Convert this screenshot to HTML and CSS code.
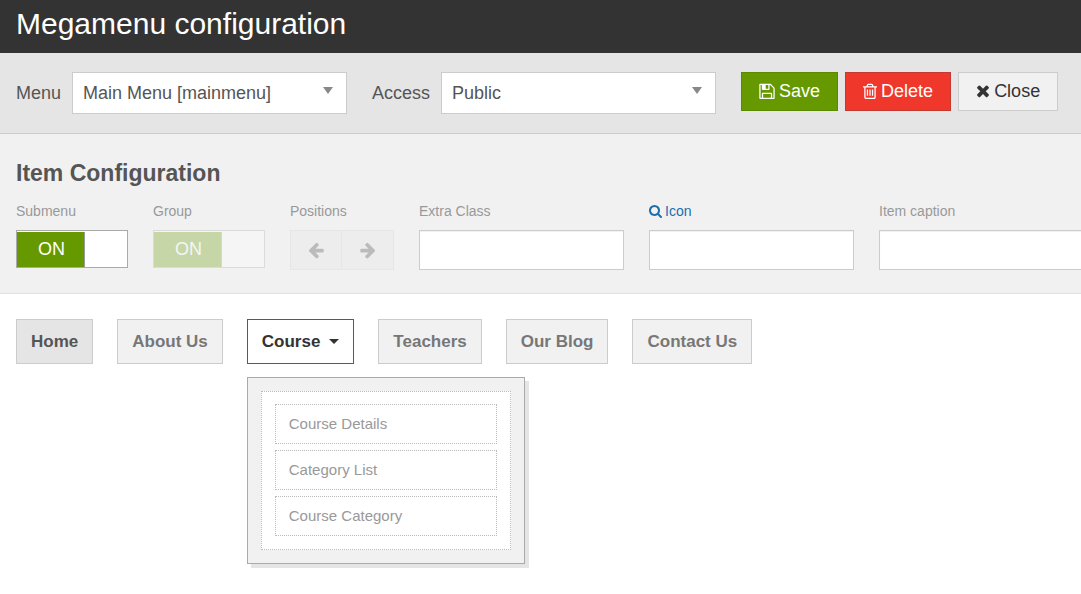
FILE: index.html
```html
<!DOCTYPE html>
<html lang="en">
<head>
<meta charset="utf-8">
<meta name="viewport" content="width=device-width, initial-scale=1">
<title>Megamenu configuration</title>
<link rel="stylesheet" href="styles.css">
</head>
<body>
<header class="page-header">
  <h1 class="page-title">Megamenu configuration</h1>
</header>

<form class="toolbar">
  <div class="picker">
    <label class="picker-label" for="menu-type">Menu</label>
    <div class="select-box">
      <select class="select" id="menu-type"><option>Main Menu [mainmenu]</option></select>
      <span class="select-arrow"></span>
    </div>
  </div>
  <div class="picker">
    <label class="picker-label" for="access-level">Access</label>
    <div class="select-box">
      <select class="select" id="access-level"><option>Public</option></select>
      <span class="select-arrow"></span>
    </div>
  </div>
  <div class="actions">
    <button class="btn btn-save" type="button">
      <svg class="btn-icon" width="16" height="18" viewBox="128 64 1536 1792" aria-hidden="true"><path d="M512 1536h768v-384h-768v384zm896 0h128v-896q0-14-10-38.5t-20-34.5l-281-281q-10-10-34-20t-39-10v416q0 40-28 68t-68 28h-576q-40 0-68-28t-28-68v-416h-128v1280h128v-416q0-40 28-68t68-28h832q40 0 68 28t28 68v416zm-384-928v-320q0-13-9.5-22.5t-22.5-9.5h-192q-13 0-22.5 9.5t-9.5 22.5v320q0 13 9.5 22.5t22.5 9.5h192q13 0 22.5-9.5t9.5-22.5zm640 32v928q0 40-28 68t-68 28h-1344q-40 0-68-28t-28-68v-1344q0-40 28-68t68-28h928q40 0 88 20t76 48l280 280q28 28 48 76t20 88z"/></svg>
      Save
    </button>
    <button class="btn btn-delete" type="button">
      <svg class="btn-icon" width="14" height="18" viewBox="192 64 1408 1792" aria-hidden="true"><path d="M704 736v576q0 14-9 23t-23 9h-64q-14 0-23-9t-9-23v-576q0-14 9-23t23-9h64q14 0 23 9t9 23zm256 0v576q0 14-9 23t-23 9h-64q-14 0-23-9t-9-23v-576q0-14 9-23t23-9h64q14 0 23 9t9 23zm256 0v576q0 14-9 23t-23 9h-64q-14 0-23-9t-9-23v-576q0-14 9-23t23-9h64q14 0 23 9t9 23zm128 724v-948h-896v948q0 22 7 40.5t14.5 27 10.5 8.5h832q3 0 10.5-8.5t14.5-27 7-40.5zm-672-1076h448l-48-117q-7-9-17-11h-317q-10 2-17 11zm928 32v64q0 14-9 23t-23 9h-96v948q0 83-47 143.5t-113 60.5h-832q-66 0-113-58.5t-47-141.5v-952h-96q-14 0-23-9t-9-23v-64q0-14 9-23t23-9h309l70-167q15-37 54-63t79-26h320q40 0 79 26t54 63l70 167h309q14 0 23 9t9 23z"/></svg>
      Delete
    </button>
    <button class="btn" type="button">
      <svg class="btn-icon" width="14" height="18" viewBox="192 128 1408 1792" aria-hidden="true"><path d="M1490 1322q0 40-28 68l-136 136q-28 28-68 28t-68-28l-294-294-294 294q-28 28-68 28t-68-28l-136-136q-28-28-28-68t28-68l294-294-294-294q-28-28-28-68t28-68l136-136q28-28 68-28t68 28l294 294 294-294q28-28 68-28t68 28l136 136q28 28 28 68t-28 68l-294 294 294 294q28 28 28 68z"/></svg>
      Close
    </button>
  </div>
</form>

<section class="item-config">
  <h2 class="section-title">Item Configuration</h2>
  <div class="fields">
    <div class="field">
      <label class="field-label" for="submenu">Submenu</label>
      <div class="toggle">
        <input class="toggle-input" id="submenu" type="checkbox" checked>
        <span class="toggle-on">ON</span>
      </div>
    </div>
    <div class="field">
      <label class="field-label" for="group">Group</label>
      <div class="toggle toggle-disabled">
        <input class="toggle-input" id="group" type="checkbox" checked disabled>
        <span class="toggle-on">ON</span>
      </div>
    </div>
    <div class="field">
      <span class="field-label" id="positions">Positions</span>
      <div class="move" role="group" aria-labelledby="positions">
        <button class="move-btn" type="button" disabled aria-label="Move left">
          <svg width="18" height="18" viewBox="0 0 1792 1792" aria-hidden="true"><path d="M1664 896v128q0 53-32.5 90.5t-84.5 37.5h-704l293 294q38 36 38 90t-38 90l-75 76q-37 37-90 37-52 0-91-37l-651-652q-37-37-37-90 0-52 37-91l651-650q38-38 91-38 52 0 90 38l75 74q38 38 38 91t-38 91l-293 293h704q52 0 84.5 37.5t32.5 90.5z"/></svg>
        </button>
        <button class="move-btn" type="button" disabled aria-label="Move right">
          <svg width="18" height="18" viewBox="0 0 1792 1792" aria-hidden="true"><path transform="translate(1792 0) scale(-1 1)" d="M1664 896v128q0 53-32.5 90.5t-84.5 37.5h-704l293 294q38 36 38 90t-38 90l-75 76q-37 37-90 37-52 0-91-37l-651-652q-37-37-37-90 0-52 37-91l651-650q38-38 91-38 52 0 90 38l75 74q38 38 38 91t-38 91l-293 293h704q52 0 84.5 37.5t32.5 90.5z"/></svg>
        </button>
      </div>
    </div>
    <div class="field">
      <label class="field-label" for="extra-class">Extra Class</label>
      <input class="text-input" id="extra-class" type="text">
    </div>
    <div class="field">
      <a class="field-label field-link" id="icon-label" href="#">
        <svg width="13" height="13" viewBox="64 128 1664 1664" aria-hidden="true"><path d="M1216 832q0-185-131.5-316.5t-316.5-131.5-316.5 131.5-131.5 316.5 131.5 316.5 316.5 131.5 316.5-131.5 131.5-316.5zm512 832q0 52-38 90t-90 38q-54 0-90-38l-343-342q-179 124-399 124-143 0-273.5-55.5t-225-150-150-225-55.5-273.5 55.5-273.5 150-225 225-150 273.5-55.5 273.5 55.5 225 150 150 225 55.5 273.5q0 220-124 399l343 343q37 37 37 90z"/></svg>
        Icon
      </a>
      <input class="text-input" type="text" aria-labelledby="icon-label">
    </div>
    <div class="field">
      <label class="field-label" for="caption">Item caption</label>
      <input class="text-input" id="caption" type="text">
    </div>
  </div>
</section>

<nav class="megamenu">
  <ul class="menu">
    <li class="menu-item"><a class="menu-link menu-link-home" href="#">Home</a></li>
    <li class="menu-item"><a class="menu-link" href="#">About Us</a></li>
    <li class="menu-item">
      <a class="menu-link menu-link-open" href="#">Course <span class="caret"></span></a>
      <div class="dropdown">
        <ul class="submenu">
          <li><a class="submenu-link" href="#">Course Details</a></li>
          <li><a class="submenu-link" href="#">Category List</a></li>
          <li><a class="submenu-link" href="#">Course Category</a></li>
        </ul>
      </div>
    </li>
    <li class="menu-item"><a class="menu-link" href="#">Teachers</a></li>
    <li class="menu-item"><a class="menu-link" href="#">Our Blog</a></li>
    <li class="menu-item"><a class="menu-link" href="#">Contact Us</a></li>
  </ul>
</nav>
</body>
</html>
```
FILE: styles.css
```css
* {
  box-sizing: border-box;
}

body {
  min-height: 100vh;
  margin: 0;
  background: #fff;
  color: #555;
  font-family: "Liberation Sans", Arial, sans-serif;
  font-size: 18px;
}

svg {
  display: block;
  fill: currentColor;
}

a {
  text-decoration: none;
}

ul {
  margin: 0;
  padding: 0;
  list-style: none;
}

button,
input,
select {
  margin: 0;
  border-radius: 0;
  font: inherit;
}

.page-header {
  padding: 4px 16px 9px;
  background: #333;
}

.page-title {
  margin: 0;
  color: #fff;
  font-size: 30px;
  font-weight: 400;
  line-height: 40px;
}

/* Toolbar */

.toolbar {
  display: flex;
  align-items: flex-start;
  gap: 25px;
  padding: 19px 16px;
  border-bottom: 1px solid #ccc;
  background: #e5e5e5;
}

.picker {
  display: flex;
  align-items: center;
  gap: 11px;
}

.select-box {
  position: relative;
}

.select {
  display: block;
  width: 275px;
  height: 42px;
  padding: 0 32px 0 10px;
  border: 1px solid #ccc;
  background: #fff;
  color: #555;
  appearance: none;
}

.select-arrow {
  position: absolute;
  top: 15px;
  right: 14px;
  border: 5px solid transparent;
  border-top: 7px solid #888;
  border-bottom: 0;
  pointer-events: none;
}

.actions {
  display: flex;
  gap: 7px;
}

.btn {
  display: flex;
  align-items: center;
  gap: 4px;
  height: 39px;
  padding: 0 17px;
  border: 1px solid #ccc;
  background: #f1f1f1;
  color: #333;
}

.btn-save {
  border-color: #5b8a00;
  background: #690;
  color: #fff;
}

.btn-delete {
  border-color: #c43a30;
  background: #f0372b;
  color: #fff;
}

/* Item configuration */

.item-config {
  padding: 24px 16px 23px;
  border-bottom: 1px solid #e0e0e0;
  background: #f1f1f1;
  overflow: hidden;
}

.section-title {
  margin: 0 0 14px;
  font-size: 23px;
  line-height: 30px;
}

.fields {
  display: flex;
  gap: 25px;
}

.field {
  flex: none;
}

.field-label {
  display: block;
  margin-bottom: 9px;
  color: #999;
  font-size: 14px;
  line-height: 19px;
}

.field-link {
  display: flex;
  align-items: center;
  gap: 3px;
  color: #1a6fb0;
}

.toggle {
  position: relative;
  width: 112px;
  height: 38px;
  padding-top: 1px;
  border: 1px solid #aaa;
  background: #fff;
}

.toggle-input {
  position: absolute;
  inset: 0;
  width: 100%;
  height: 100%;
  opacity: 0;
}

.toggle-on {
  display: block;
  width: 68px;
  height: 35px;
  padding-left: 2px;
  border-right: 1px solid #999;
  background: #690;
  color: #fff;
  line-height: 35px;
  text-align: center;
}

.toggle-disabled {
  opacity: 0.3;
}

.move {
  display: flex;
}

.move-btn {
  display: flex;
  align-items: center;
  justify-content: center;
  width: 52px;
  height: 40px;
  padding: 0;
  border: 1px solid #e6e6e6;
  background: #ededed;
  color: #bbb;
}

.move-btn + .move-btn {
  border-left: 0;
}

.text-input {
  display: block;
  width: 205px;
  height: 40px;
  padding: 0 10px;
  border: 1px solid #ccc;
  background: #fff;
  box-shadow: inset 0 1px 1px rgba(0, 0, 0, 0.06);
}

/* Menu preview */

.megamenu {
  min-height: 300px;
  padding: 25px 16px;
}

.menu {
  display: flex;
  gap: 24px;
}

.menu-item {
  position: relative;
}

.menu-link {
  display: flex;
  align-items: center;
  gap: 9px;
  height: 45px;
  padding: 0 14px;
  border: 1px solid #ccc;
  background: #f1f1f1;
  color: #777;
  font-size: 17px;
  font-weight: 700;
  white-space: nowrap;
}

.menu-link-home {
  background: #e5e5e5;
  color: #555;
}

.menu-link-open {
  border-color: #1b6e95;
  background: #fff;
  color: #333;
}

.caret {
  border: 5px solid transparent;
  border-top-color: #333;
  border-bottom: 0;
}

.dropdown {
  position: absolute;
  top: 58px;
  left: 0;
  width: 278px;
  padding: 13px;
  border: 1px solid #aaa;
  background: #f1f1f1;
  box-shadow: 4px 4px 0 #e5e5e5;
}

.submenu {
  display: grid;
  gap: 6px;
  padding: 12px 13px 13px;
  border: 1px dotted #bbb;
  background: #fff;
}

.submenu-link {
  display: block;
  padding: 0 13px;
  border: 1px dotted #bbb;
  color: #999;
  font-size: 15px;
  line-height: 38px;
}
```
